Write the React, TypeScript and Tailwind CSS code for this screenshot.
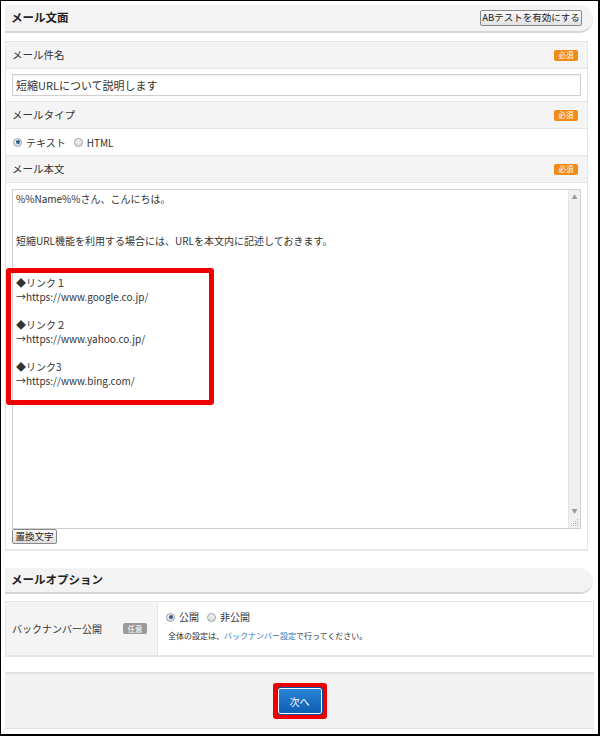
const font = "font-['Meiryo','Noto_Sans_CJK_JP',sans-serif]";

function Badge({ label, tone = "orange" }: { label: string; tone?: "orange" | "gray" }) {
  return (
    <span
      className={
        "inline-flex items-center justify-center w-[24px] h-[11px] rounded-[2px] text-[7.5px] leading-none text-white " +
        (tone == "orange" ? "bg-[#f28a16]" : "bg-[#9a9a9a]")
      }
    >
      {label}
    </span>
  );
}

function Radio({ checked }: { checked?: boolean }) {
  return (
    <span className="inline-flex items-center justify-center w-[9px] h-[9px] rounded-full border border-[#9aa0a6] bg-gradient-to-b from-[#f4f4f4] to-[#dcdcdc]">
      {checked && <span className="w-[4px] h-[4px] rounded-full bg-[#2c5f8f]" />}
    </span>
  );
}

function SectionTitle({ title, children, h }: { title: string; children?: React.ReactNode; h: string }) {
  return (
    <div className={"flex items-center justify-between mr-[-5px] pl-[6px] pr-[11px] bg-[#f3f3f3] rounded-r-[14px] border-b-2 border-[#d6d6d6] " + h}>
      <span className="text-[11.5px] font-bold text-[#222]">{title}</span>
      {children}
    </div>
  );
}

function LabelRow({ label }: { label: string }) {
  return (
    <div className="flex items-center justify-between h-[27px] pl-[6px] pr-[9px] bg-[#f4f4f4] border-b border-[#e6e6e6]">
      <span className="text-[10.5px] text-[#333]">{label}</span>
      <Badge label="必須" />
    </div>
  );
}

const bodyLines = [
  "%%Name%%さん、こんにちは。",
  "",
  "",
  "短縮URL機能を利用する場合には、URLを本文内に記述しておきます。",
  "",
  "",
  "◆リンク１",
  "→https://www.google.co.jp/",
  "",
  "◆リンク２",
  "→https://www.yahoo.co.jp/",
  "",
  "◆リンク3",
  "→https://www.bing.com/",
];

export default function App() {
  return (
    <div className={"relative w-[600px] h-[736px] bg-white border-l border-t border-r-2 border-b-2 border-black text-[#333] " + font}>
      <div className="pl-[4px] pr-[10px] pt-[4px]">
        <SectionTitle title="メール文面" h="h-[28px]">
          <button className="w-[102px] h-[16px] whitespace-nowrap text-[9.5px] leading-none text-[#222] bg-gradient-to-b from-[#fafafa] to-[#e2e2e2] border border-[#8a8a8a] rounded-[2px]">
            ABテストを有効にする
          </button>
        </SectionTitle>

        <div className="mt-[8px] border border-[#e6e6e6] border-b-2">
          <LabelRow label="メール件名" />
          <div className="px-[6px] pt-[5px] pb-[5px] border-b border-[#e6e6e6]">
            <div className="h-[22px] flex items-center px-[3px] border border-[#cfcfcf] text-[11px] text-[#333] shadow-[inset_0_1px_1px_rgba(0,0,0,0.08)]">
              短縮URLについて説明します
            </div>
          </div>
          <LabelRow label="メールタイプ" />
          <div className="flex items-center gap-[4px] h-[27px] pl-[7px] border-b border-[#e6e6e6] text-[10px]">
            <Radio checked />
            <span className="mr-[4px]">テキスト</span>
            <Radio />
            <span>HTML</span>
          </div>
          <LabelRow label="メール本文" />
          <div className="px-[6px] pt-[6px] pb-[5px]">
            <div className="relative h-[340px] flex border border-[#cfcfcf]">
              <div className="flex-1 pl-[3px] pt-[2px] text-[10px] leading-[14px] text-[#333]">
                {bodyLines.map((line, i) => (
                  <div key={i} className="h-[14px] whitespace-pre">
                    {line}
                  </div>
                ))}
              </div>
              <div className="w-[12px] flex flex-col items-center justify-between bg-[#f0f0f0] border-l border-[#e4e4e4] pt-[4px] pb-[14px]">
                <span className="text-[6px] leading-none text-[#999]">▲</span>
                <span className="text-[6px] leading-none text-[#999]">▼</span>
              </div>
              <svg className="absolute right-[1px] bottom-[1px]" width="9" height="9" viewBox="0 0 9 9">
                <g fill="#b0b0b0">
                  <rect x="7" y="1" width="1" height="1" />
                  <rect x="5" y="3" width="1" height="1" />
                  <rect x="7" y="3" width="1" height="1" />
                  <rect x="3" y="5" width="1" height="1" />
                  <rect x="5" y="5" width="1" height="1" />
                  <rect x="7" y="5" width="1" height="1" />
                  <rect x="1" y="7" width="1" height="1" />
                  <rect x="3" y="7" width="1" height="1" />
                  <rect x="5" y="7" width="1" height="1" />
                  <rect x="7" y="7" width="1" height="1" />
                </g>
              </svg>
            </div>
            <div className="flex">
              <button className="w-[45px] h-[15px] whitespace-nowrap text-[9.5px] leading-none text-[#222] bg-gradient-to-b from-[#fafafa] to-[#dedede] border border-[#8a8a8a] rounded-[2px]">
                置換文字
              </button>
            </div>
          </div>
        </div>

        <div className="mt-[17px]">
          <SectionTitle title="メールオプション" h="h-[26px]" />
        </div>

        <div className="mt-[7px] mr-[-6px] flex h-[56px] border border-[#e6e6e6] border-b-2">
          <div className="w-[152px] flex items-center justify-between pl-[6px] pr-[10px] bg-[#f4f4f4] border-r border-[#e6e6e6]">
            <span className="text-[10px] text-[#333]">バックナンバー公開</span>
            <Badge label="任意" tone="gray" />
          </div>
          <div className="flex-1 pl-[8px] pt-[8px]">
            <div className="flex items-center gap-[4px] text-[10px] leading-[14px]">
              <Radio checked />
              <span className="mr-[4px]">公開</span>
              <Radio />
              <span>非公開</span>
            </div>
            <div className="mt-[6px] pl-[2px] text-[8px] leading-[12px] text-[#333]">
              全体の設定は、<span className="text-[#3b76b5]">バックナンバー設定</span>で行ってください。
            </div>
          </div>
        </div>
      </div>

      <div className="mt-[15px] ml-[4px] mr-[4px] h-[57px] flex items-center justify-center bg-[#f2f2f2] border-t-2 border-b border-[#e2e2e2]">
        <div className="p-[5px] bg-[#ee0000] rounded-[3px]">
          <button className="flex items-center justify-center w-[44px] h-[26px] text-[10px] text-white bg-gradient-to-b from-[#2a84d6] to-[#0c5eb3] border border-white rounded-[2px] outline outline-1 outline-[#0b4f96]">
            次へ
          </button>
        </div>
      </div>

      <div className="pointer-events-none absolute left-[5px] top-[267px] w-[208px] h-[137px] border-[5px] border-[#ee0000] rounded-[3px]" />
    </div>
  );
}
